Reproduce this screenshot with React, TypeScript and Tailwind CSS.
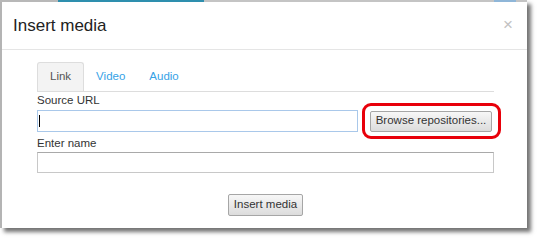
import React from "react";

// Insert media dialog (Moodle-style), with the highlighted "Browse repositories" button.

const TABS = ["Link", "Video", "Audio"];

export default function App() {
  return (
    <div className="h-[241px] w-[540px] bg-white font-['Liberation_Sans',Arial,sans-serif]">
      <div className="flex h-[228px] w-[527px] flex-col bg-white shadow-[4px_4px_4px_rgba(0,0,0,0.55)]">
        {/* strip of the page behind the dialog */}
        <div className="flex h-[2px] shrink-0">
          <div className="w-[58px] bg-[#b8b8b8]" />
          <div className="w-[146px] bg-[#2e8fae]" />
          <div className="w-[290px] bg-[#c4c4c4]" />
          <div className="w-[22px] bg-[#8fb6d8]" />
          <div className="flex-1 bg-[#c4c4c4]" />
        </div>
        <div className="flex flex-1">
          <div className="w-[2px] bg-[#b4b4b4]" />
          <div className="flex flex-1 flex-col">
            {/* header */}
            <div className="flex h-[48px] items-center justify-between border-b border-[#e5e5e5] pl-[11px] pr-[14px]">
              <h1 className="pt-[1px] text-[17px] text-[#222]">Insert media</h1>
              <span className="mb-[3px] text-[17px] leading-none text-[#c2c2c2]">×</span>
            </div>

            {/* body */}
            <div className="flex flex-col pl-[35px] pr-[33px] pt-[12px] text-[11.5px] text-[#333]">
              <div className="flex h-[30px] border-b border-[#dddddd]">
                {TABS.map((t, i) => (
                  <div
                    key={t}
                    className={`flex items-center px-[12px] ${
                      i === 0
                        ? "rounded-t-[3px] border border-b-0 border-[#dddddd] bg-[#f3f3f3] text-[#555]"
                        : "text-[#36a2e6]"
                    }`}
                  >
                    {t}
                  </div>
                ))}
              </div>

              <label className="mt-[1px] leading-[15px]">Source URL</label>
              <div className="mt-[2px] flex items-center">
                <div className="flex h-[22px] w-[321px] items-center border border-[#a9c8ea] px-[1px]">
                  <span className="h-[12px] w-[1px] bg-black" />
                </div>
                <div className="relative ml-[12px]">
                  <button className="h-[21px] w-[122px] rounded-[2px] border border-[#a6a6a6] bg-gradient-to-b from-[#f7f7f7] to-[#dcdcdc] text-[11.5px] text-[#333]">
                    Browse repositories...
                  </button>
                  <div className="pointer-events-none absolute -bottom-[7px] -left-[8px] -right-[9px] -top-[8px] rounded-[9px] border-[3px] border-[#e8000a]" />
                </div>
              </div>

              <label className="mt-[4px] leading-[15px]">Enter name</label>
              <div className="mt-[1px] h-[21px] w-full border border-[#c8c8c8] border-t-[#a9a9a9]" />

              <div className="mt-[21px] flex justify-center">
                <button className="h-[22px] w-[75px] rounded-[2px] border border-[#a6a6a6] bg-gradient-to-b from-[#f7f7f7] to-[#dcdcdc] text-[11.5px] text-[#333]">
                  Insert media
                </button>
              </div>
            </div>
          </div>
        </div>
      </div>
    </div>
  );
}
